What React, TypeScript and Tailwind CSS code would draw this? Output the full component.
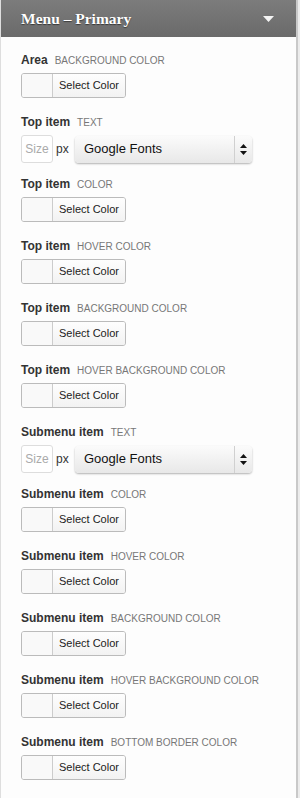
type Row = { name: string; kind: string; type: 'color' | 'text' };

const rows: Row[] = [
  { name: 'Area', kind: 'Background color', type: 'color' },
  { name: 'Top item', kind: 'Text', type: 'text' },
  { name: 'Top item', kind: 'Color', type: 'color' },
  { name: 'Top item', kind: 'Hover color', type: 'color' },
  { name: 'Top item', kind: 'Background color', type: 'color' },
  { name: 'Top item', kind: 'Hover background color', type: 'color' },
  { name: 'Submenu item', kind: 'Text', type: 'text' },
  { name: 'Submenu item', kind: 'Color', type: 'color' },
  { name: 'Submenu item', kind: 'Hover color', type: 'color' },
  { name: 'Submenu item', kind: 'Background color', type: 'color' },
  { name: 'Submenu item', kind: 'Hover background color', type: 'color' },
  { name: 'Submenu item', kind: 'Bottom border color', type: 'color' }
];

const ColorPicker = () => (
  <div className="flex h-[25px] w-[105px] rounded-[3px] border border-[#bbb] bg-[#f7f7f7] overflow-hidden">
    <div className="w-[31px] border-r border-[#ccc] bg-[#f9f9f9]" />
    <div className="flex-1 flex items-center justify-center text-[11px] text-[#222] bg-gradient-to-b from-[#fefefe] to-[#f2f2f2]">
      Select Color
    </div>
  </div>
);

const FontPicker = () => (
  <div className="flex items-center h-[28px]">
    <div className="w-[32px] h-[28px] rounded-[3px] border border-[#ddd] bg-white flex items-center justify-center text-[12px] text-[#aaa]">
      Size
    </div>
    <span className="ml-[3px] w-[18px] text-[12px] text-[#333]">px</span>
    <div className="ml-[1px] flex h-[27px] w-[177px] rounded-[4px] bg-gradient-to-b from-[#fbfbfb] to-[#e8e8e8] shadow-[0_1px_2px_rgba(0,0,0,0.3)]">
      <div className="flex-1 flex items-center pl-[9px] text-[13px] text-[#111]">Google Fonts</div>
      <div className="w-[18px] border-l border-[#d0d0d0] flex items-center justify-center">
        <svg width="7" height="11" viewBox="0 0 7 11">
          <path d="M3.5 0 L7 4 H0 Z" fill="#111" />
          <path d="M3.5 11 L7 7 H0 Z" fill="#111" />
        </svg>
      </div>
    </div>
  </div>
);

export default function App() {
  return (
    <div
      className="w-[300px] h-[798px] bg-[#ececec] overflow-hidden"
      style={{ fontFamily: '"Liberation Sans", Arial, sans-serif' }}
    >
      <div className="w-[298px] h-full border-l border-[#dedede] border-r-2 border-r-[#c9c9c9] bg-[#fdfdfd]">
        <div className="h-[37px] flex items-center justify-between pl-[20px] pr-[22px] bg-gradient-to-b from-[#7c7c7c] to-[#6a6a6a]">
          <h3
            className="text-[15.5px] font-bold text-white [text-shadow:0_1px_1px_rgba(0,0,0,0.5)]"
            style={{ fontFamily: '"Liberation Serif", "Times New Roman", serif' }}
          >
            Menu – Primary
          </h3>
          <svg width="11" height="6" viewBox="0 0 11 6">
            <path d="M0 0 H11 L5.5 6 Z" fill="#f4f4f4" />
          </svg>
        </div>
        <div className="pl-[20px] pt-[14px] flex flex-col">
          {rows.map((r, i) => (
            <div key={i} className="h-[62px]">
              <div className="flex items-baseline gap-[7px] h-[20px]">
                <span className="text-[12px] font-bold text-[#333]">{r.name}</span>
                <span className="text-[10px] uppercase text-[#777]">{r.kind}</span>
              </div>
              <div className="mt-[2px]">
                {r.type === 'color' ? <ColorPicker /> : <FontPicker />}
              </div>
            </div>
          ))}
        </div>
      </div>
    </div>
  );
}
